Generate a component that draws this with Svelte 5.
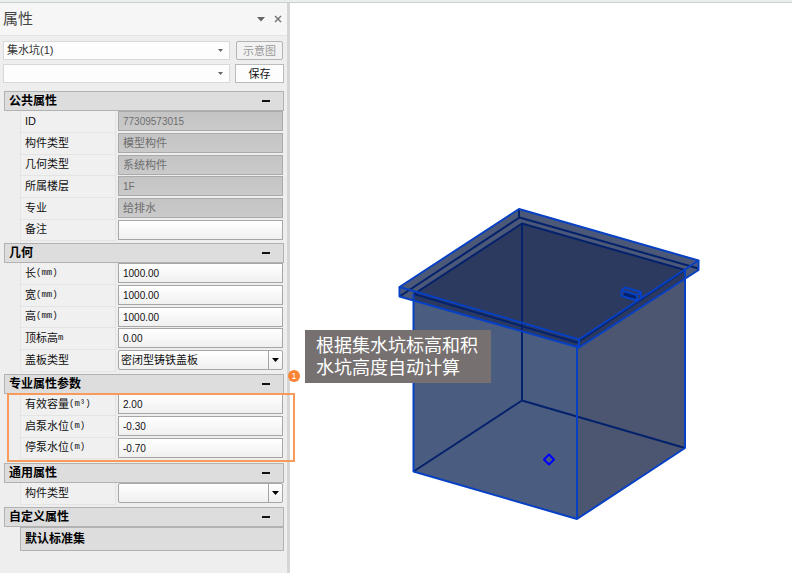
<script lang="ts">
	type Row = {
		id: string;
		label: string;
		unit?: string;
		value: string;
		disabled?: boolean;
		latin?: boolean;
		options?: string[];
	};

	type Group = {
		title: string;
		open: boolean;
		marked?: boolean;
		subset?: string;
		rows: Row[];
	};

	let component = $state('集水坑(1)');
	let preset = $state('');

	let groups: Group[] = $state([
		{
			title: '公共属性',
			open: true,
			rows: [
				{ id: 'uid', label: 'ID', value: '77309573015', disabled: true, latin: true },
				{ id: 'type', label: '构件类型', value: '模型构件', disabled: true },
				{ id: 'geometry', label: '几何类型', value: '系统构件', disabled: true },
				{ id: 'floor', label: '所属楼层', value: '1F', disabled: true, latin: true },
				{ id: 'major', label: '专业', value: '给排水', disabled: true },
				{ id: 'remark', label: '备注', value: '' }
			]
		},
		{
			title: '几何',
			open: true,
			rows: [
				{ id: 'length', label: '长', unit: '(mm)', value: '1000.00', latin: true },
				{ id: 'width', label: '宽', unit: '(mm)', value: '1000.00', latin: true },
				{ id: 'height', label: '高', unit: '(mm)', value: '1000.00', latin: true },
				{ id: 'top', label: '顶标高', unit: 'm', value: '0.00', latin: true },
				{ id: 'cover', label: '盖板类型', value: '密闭型铸铁盖板', options: ['密闭型铸铁盖板'] }
			]
		},
		{
			title: '专业属性参数',
			open: true,
			marked: true,
			rows: [
				{ id: 'volume', label: '有效容量', unit: '(m³)', value: '2.00', latin: true },
				{ id: 'start', label: '启泵水位', unit: '(m)', value: '-0.30', latin: true },
				{ id: 'stop', label: '停泵水位', unit: '(m)', value: '-0.70', latin: true }
			]
		},
		{
			title: '通用属性',
			open: true,
			rows: [{ id: 'common', label: '构件类型', value: '', options: [''] }]
		},
		{ title: '自定义属性', open: true, subset: '默认标准集', rows: [] }
	]);
</script>

<div class="app">
	<div class="strip"></div>

	<div class="workspace">
		<aside class="panel">
			<header class="title-bar">
				<h1>属性</h1>
				<button type="button" class="icon" aria-label="菜单">
					<svg width="8" height="5" viewBox="0 0 8 5"><path d="M0 0h8L4 4.500z" fill="#666" /></svg>
				</button>
				<button type="button" class="icon" aria-label="关闭">
					<svg width="8" height="8" viewBox="0 0 8 8">
						<path d="M1 1l6 6M7 1L1 7" stroke="#777" stroke-width="1.500" />
					</svg>
				</button>
			</header>

			<div class="toolbar">
				<div class="combo">
					<select aria-label="构件" bind:value={component}>
						<option>集水坑(1)</option>
					</select>
					<svg width="5" height="3" viewBox="0 0 5 3"><path d="M0 0h5L2.500 3z" fill="#666" /></svg>
				</div>
				<button type="button" class="sketch" disabled>示意图</button>
				<div class="combo">
					<select aria-label="方案" bind:value={preset}>
						<option value=""></option>
					</select>
					<svg width="5" height="3" viewBox="0 0 5 3"><path d="M0 0h5L2.500 3z" fill="#666" /></svg>
				</div>
				<button type="button" class="save">保存</button>
			</div>

			<div class="groups">
				{#each groups as group (group.title)}
					<section class="group" class:marked={group.marked}>
						<button
							type="button"
							class="group-title"
							aria-expanded={group.open}
							onclick={() => (group.open = !group.open)}
						>
							<span>{group.title}</span>
							<i class="sign" class:closed={!group.open}></i>
						</button>

						{#if group.open}
							<div class="rows">
								{#each group.rows as row (row.id)}
									<div class="row">
										<label for={row.id}
											>{row.label}{#if row.unit}<span class="unit">{row.unit}</span>{/if}</label
										>
										{#if row.options}
											<div class="field drop">
												<select id={row.id} bind:value={row.value}>
													{#each row.options as option}
														<option value={option}>{option}</option>
													{/each}
												</select>
												<svg width="7" height="4" viewBox="0 0 7 4"><path d="M0 0h7L3.500 4z" /></svg>
											</div>
										{:else}
											<input
												id={row.id}
												class="field"
												class:latin={row.latin}
												type="text"
												disabled={row.disabled}
												bind:value={row.value}
											/>
										{/if}
									</div>
								{/each}
							</div>
							{#if group.subset}
								<h2 class="subset">{group.subset}</h2>
							{/if}
						{/if}

						{#if group.marked}
							<div class="frame"></div>
							<span class="badge">1</span>
							<p class="note">根据集水坑标高和积水坑高度自动计算</p>
						{/if}
					</section>
				{/each}
			</div>
		</aside>

		<main class="viewport">
			<svg class="model" width="304" height="318" viewBox="398 204 304 318" role="img" aria-label="集水坑">
				<!-- pit walls -->
				<path d="M413.500 294L577 345V519L413.500 471.500z" fill="#4a5c80" />
				<path d="M577 345L685 270V448L577 519z" fill="#4c5671" />

				<!-- cover plate -->
				<path d="M399.500 287L519 209L698.500 260.500V270L579 347.500L399.500 296.500z" fill="#4b5878" />
				<path d="M413.500 291L414 294L522 223.500L685 269.500L579 339.500z" fill="#2d3a60" />
				<path d="M413.500 291L579 339.500L685 269.500V278.500L579 347.500L413.500 300.500z" fill="#2b3961" />

				<g class="hidden-edges">
					<path d="M522 223.500V400.500M413.500 471.500L522 400.500L685 448" />
					<path d="M414 294L522 223.500L685 270M414 294L577 342.500L685 270" />
					<path d="M519 209V217.500M399.500 296.500L519.500 217.500L698.500 268.500" />
				</g>

				<g class="edges">
					<path d="M413.500 294V471.500L577 519L685 448V270" />
					<path d="M577 345V519" />
					<path d="M399.500 287L519 209L698.500 260.500L579 339.500z" />
					<path d="M399.500 287V296.500L579 347.500L698.500 270V260.500M579 339.500V347.500" />
				</g>

				<!-- handle -->
				<path d="M624 293.500L636 297" stroke="#04216b" stroke-width="5" />
				<path
					class="handle"
					d="M621.500 290.500V296L637 300.500L641 298V292L625 287.500L621.500 290.500L637 295V300.500M637 295L641 292"
				/>

				<path class="grip" d="M549 454.500L554 459.500L549 464.500L544 459.500z" />
			</svg>
		</main>
	</div>
</div>

<style>
	:global(body) {
		margin: 0;
		background: #fff;
	}

	* {
		box-sizing: border-box;
	}

	.app {
		display: flex;
		flex-direction: column;
		min-height: 100vh;
		font-family: 'Liberation Sans', 'Noto Sans CJK SC', sans-serif;
		font-size: 11px;
		color: #111;
	}

	button,
	input,
	select {
		margin: 0;
		padding: 0;
		font: inherit;
		color: inherit;
		border-radius: 0;
	}

	select {
		appearance: none;
	}

	.strip {
		height: 3px;
		margin-right: 5px;
		background: #e9efed;
		border-bottom: 1px solid #cbcfce;
	}

	.workspace {
		display: flex;
		flex: 1;
	}

	.panel {
		position: relative;
		z-index: 1;
		flex: none;
		width: 290px;
		background: #eee;
		border-right: 3px solid #d6d6d6;
	}

	.title-bar {
		display: flex;
		align-items: center;
		gap: 8px;
		height: 33px;
		padding: 0 5px 0 3px;
		background: #f6f6f6;
		border-bottom: 1px solid #e4e4e4;
	}

	h1 {
		flex: 1;
		margin: 0;
		font-size: 15px;
		font-weight: normal;
		line-height: 20px;
		color: #444;
	}

	.icon {
		display: grid;
		place-items: center;
		width: 9px;
		height: 16px;
		border: 0;
		background: none;
	}

	.toolbar {
		display: grid;
		grid-template-columns: 1fr 49px;
		grid-auto-rows: 19px;
		gap: 4px 5px;
		padding: 5px 3px 0 3px;
	}

	.combo {
		position: relative;
	}

	.combo select {
		width: 100%;
		height: 100%;
		padding: 0 0 1px 3px;
		border: 1px solid #d8d8d8;
		background: #fdfdfd;
		color: #333;
	}

	.combo svg {
		position: absolute;
		top: 8px;
		right: 7px;
		pointer-events: none;
	}

	.save,
	.sketch {
		padding-bottom: 2px;
	}

	.save {
		border: 1px solid #bbb;
		background: #fdfdfd;
	}

	.sketch {
		margin: 0 1px;
		border: 1px solid #b4b4b4;
		border-radius: 2px;
		background: #f2f2f2;
		color: #999;
	}

	.groups {
		padding: 8px 3px 0 4px;
	}

	.group {
		padding-bottom: 2px;
	}

	.group.marked {
		position: relative;
		padding-bottom: 4px;
	}

	.group-title {
		display: flex;
		align-items: center;
		justify-content: space-between;
		width: 100%;
		height: 20px;
		padding: 0 13px 0 4px;
		border: 1px solid #b2b2b2;
		background: #ddd;
		font-size: 12px;
		font-weight: bold;
		line-height: 16px;
		color: #000;
	}

	.sign {
		width: 8px;
		height: 2px;
		background: #111;
	}

	.sign.closed {
		height: 8px;
		width: 2px;
	}

	.rows {
		padding-left: 16px;
	}

	.row {
		display: grid;
		grid-template-columns: 96px 1fr;
		gap: 2px;
		height: 22px;
		padding-right: 1px;
	}

	.row:nth-child(3n) {
		height: 21px;
	}

	label {
		display: flex;
		align-items: center;
		padding: 0 0 2px 4px;
		border: solid #e4e4e4;
		border-width: 0 1px 1px 1px;
		background: #f0f0f0;
		line-height: 16px;
	}

	.unit {
		font-family: 'Liberation Mono', monospace;
		font-size: 9px;
	}

	.field {
		width: 100%;
		min-width: 0;
		height: 20px;
		border: 1px solid #a6a6a6;
		background: linear-gradient(#fff, #f0f0f0);
	}

	input.field {
		padding: 0 0 2px 4px;
	}

	input.latin {
		padding-bottom: 0;
		font-size: 10px;
	}

	.field:disabled {
		border-color: #aaa;
		background: linear-gradient(#c4c4c4, #cacaca);
		color: #6e6e6e;
	}

	.drop {
		position: relative;
		border-radius: 2px;
	}

	.drop select {
		display: block;
		width: 100%;
		height: 18px;
		padding-left: 2px;
		border: 0;
		background: none;
	}

	.drop svg {
		position: absolute;
		top: 0;
		right: 0;
		width: 14px;
		height: 18px;
		padding: 7px 3px;
		border-left: 1px solid #a6a6a6;
		pointer-events: none;
	}

	.subset {
		height: 24px;
		margin: 0 0 0 16px;
		padding-left: 4px;
		border: 1px solid #b2b2b2;
		background: #ddd;
		font-size: 12px;
		line-height: 22px;
		color: #000;
	}

	.frame {
		position: absolute;
		top: 19px;
		right: -11px;
		bottom: 1px;
		left: 3px;
		border: 2px solid #f79a5a;
		pointer-events: none;
	}

	.badge {
		position: absolute;
		top: -4px;
		right: -16px;
		width: 12px;
		height: 12px;
		border-radius: 50%;
		background: #fa8433;
		color: #fff;
		font-size: 9px;
		line-height: 12px;
		text-align: center;
	}

	.note {
		position: absolute;
		top: -44px;
		left: 301px;
		width: 186px;
		margin: 0;
		padding: 5px 11px 4px;
		background: #767170;
		color: #fff;
		font-size: 18px;
		line-height: 22px;
	}

	.viewport {
		flex: 1;
		min-width: 0;
		padding: 201px 0 0 108px;
	}

	.model {
		display: block;
		fill: none;
		stroke-linejoin: round;
	}

	.hidden-edges {
		stroke: #04216b;
		stroke-width: 2;
	}

	.edges {
		stroke: #0640c4;
		stroke-width: 2;
	}

	.handle {
		stroke: #0640c4;
		stroke-width: 2;
	}

	.grip {
		stroke: #00f;
		stroke-width: 2;
	}
</style>
